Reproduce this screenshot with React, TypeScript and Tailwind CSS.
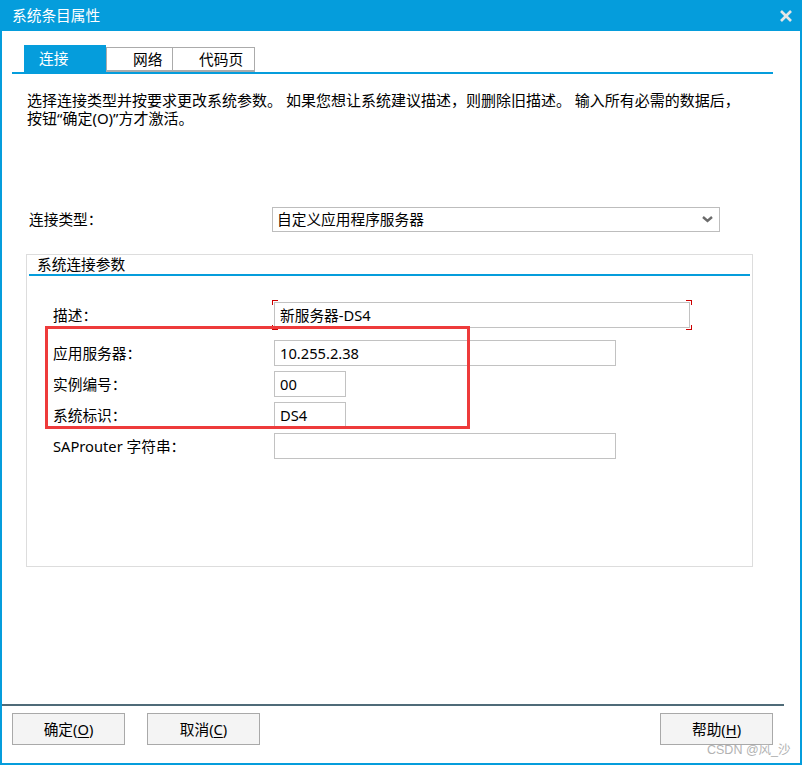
import React from 'react'

function CloseIcon() {
  return (
    <svg width="12" height="12" viewBox="0 0 12 12" className="block">
      <line x1="1" y1="1" x2="11" y2="11" stroke="#E6E6E6" strokeWidth="2.6" />
      <line x1="11" y1="1" x2="1" y2="11" stroke="#E6E6E6" strokeWidth="2.6" />
    </svg>
  )
}

function Chevron() {
  return (
    <svg width="11" height="7" viewBox="0 0 11 7" className="block">
      <polyline points="1,1 5.5,5 10,1" fill="none" stroke="#6B6B6B" strokeWidth="2.4" />
    </svg>
  )
}

interface FieldProps {
  label: string
  value?: string
  boxClass: string
  marked?: boolean
}

function Field({ label, value = '', boxClass, marked = false }: FieldProps) {
  return (
    <div className="flex items-center h-[26px]">
      <div className="w-[221px] shrink-0">{label}</div>
      <div className={`relative h-[26px] border border-[#C2C2C2] flex items-center pl-[5px] ${boxClass}`}>
        {value}
        {marked && (
          <>
            <span className="absolute -left-[3px] -top-[3px] w-[6px] h-[5px] border-l border-t border-[#CC0000]" />
            <span className="absolute -right-[3px] -top-[3px] w-[6px] h-[5px] border-r border-t border-[#CC0000]" />
            <span className="absolute -left-[3px] -bottom-[3px] w-[6px] h-[5px] border-l border-b border-[#CC0000]" />
            <span className="absolute -right-[3px] -bottom-[3px] w-[6px] h-[5px] border-r border-b border-[#CC0000]" />
          </>
        )}
      </div>
    </div>
  )
}

function Button({ text, hot }: { text: string; hot: string }) {
  return (
    <button className="w-[113px] h-[32px] bg-[#F4F4F4] border border-[#A9A9A9] flex items-center justify-center">
      {text}(<span className="underline underline-offset-2">{hot}</span>)
    </button>
  )
}

export default function App() {
  return (
    <div className="w-[802px] h-[765px] bg-[#059DDC] flex flex-col relative text-[14.7px] text-black font-['Noto_Sans','Noto_Sans_CJK_SC',sans-serif]">
      {/* title bar */}
      <div className="h-[31px] flex items-center justify-between pl-[12px] pr-[10px] shrink-0">
        <span className="text-white leading-none">系统条目属性</span>
        <CloseIcon />
      </div>

      <div className="flex-1 mx-[2px] mb-[2px] bg-white flex flex-col">
        {/* tabs */}
        <div className="mt-[14px] ml-[10px] w-[761px] border-b-2 border-[#059DDC] flex items-end pl-[12px]">
          <div className="w-[82px] h-[27px] bg-[#059DDC] text-white flex items-center pl-[15px]">连接</div>
          <div className="w-[67px] h-[25px] border border-b-2 border-[#ABABAB] flex items-center pl-[26px]">网络</div>
          <div className="w-[82px] h-[25px] border border-l-0 border-b-2 border-[#ABABAB] flex items-center pl-[26px]">代码页</div>
        </div>

        {/* description */}
        <div className="mt-[17px] pl-[25px] flex flex-col whitespace-nowrap text-[15px]">
          <div className="h-[18px] leading-[18px]">
            选择连接类型并按要求更改系统参数。 如果您想让系统建议描述，则删除旧描述。 输入所有必需的数据后，
          </div>
          <div className="h-[18px] leading-[18px]">按钮“确定(O)”方才激活。</div>
        </div>

        {/* connection type */}
        <div className="mt-[80px] flex items-center pl-[27px]">
          <div className="w-[243px] shrink-0">连接类型：</div>
          <div className="w-[448px] h-[25px] border border-[#BDBDBD] flex items-center justify-between pl-[4px] pr-[6px]">
            <span>自定义应用程序服务器</span>
            <Chevron />
          </div>
        </div>

        {/* group box */}
        <div className="relative ml-[24px] mt-[22px] w-[727px] h-[313px] border border-[#DDDDDD] flex flex-col">
          <div className="h-[19px] pl-[10px] flex items-center">系统连接参数</div>
          <div className="mx-[2px] h-[2px] bg-[#059DDC]" />
          <div className="pl-[26px] pt-[26px] flex flex-col">
            <Field label="描述：" value="新服务器-DS4" boxClass="w-[416px]" marked />
            <div className="mt-[12px] flex flex-col gap-[5px]">
              <Field label="应用服务器：" value="10.255.2.38" boxClass="w-[342px]" />
              <Field label="实例编号：" value="00" boxClass="w-[72px]" />
              <Field label="系统标识：" value="DS4" boxClass="w-[72px]" />
              <Field label="SAProuter 字符串：" boxClass="w-[342px]" />
            </div>
          </div>
          <div className="absolute left-[18px] top-[71px] w-[425px] h-[103px] border-[3px] border-[#EE3B3B]" />
        </div>

        <div className="flex-1" />

        {/* footer */}
        <div className="h-[2px] w-[782px] bg-[#4F6B78]" />
        <div className="mt-[7px] mb-[18px] flex justify-between pl-[10px] pr-[27px]">
          <div className="flex gap-[22px]">
            <Button text="确定" hot="O" />
            <Button text="取消" hot="C" />
          </div>
          <Button text="帮助" hot="H" />
        </div>
      </div>

      <div className="absolute left-[707px] top-[741px] text-[12.5px] text-[#B2B2B2] font-['Liberation_Sans','Noto_Sans_CJK_SC',sans-serif]">
        CSDN @风_沙
      </div>
    </div>
  )
}
